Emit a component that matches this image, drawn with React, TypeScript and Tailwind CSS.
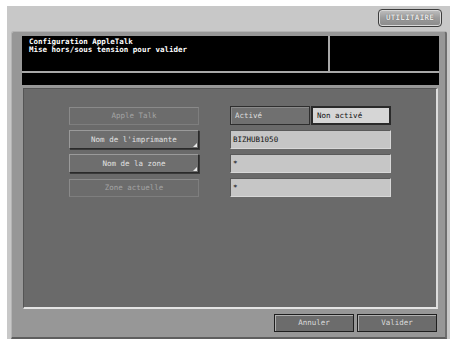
import React from "react";

const mono = { fontFamily: '"DejaVu Sans Mono", "Liberation Mono", monospace' };

function LeftBtn({ label, disabled, corner }: { label: string; disabled?: boolean; corner?: boolean }) {
  if (disabled) {
    return (
      <div className="relative h-[18px] w-[130px] flex items-center justify-center border border-t-[#8a8a8a] border-l-[#8a8a8a] border-b-[#7e7e7e] border-r-[#7e7e7e] bg-[#6c6c6c] text-[#a4a4a4] text-[7.5px]">
        {label}
      </div>
    );
  }
  return (
    <div className="relative h-[19px] w-[130px] flex items-center justify-center border border-t-[#9a9a9a] border-l-[#9a9a9a] border-b-[#2a2a2a] border-r-[#2a2a2a] bg-[#6e6e6e] text-[#e2e2e2] text-[7.5px] shadow-[1px_1px_0_#3a3a3a]">
      {label}
      {corner && (
        <div className="absolute right-[1px] bottom-[1px] w-0 h-0 border-l-[4px] border-l-transparent border-b-[4px] border-b-[#e8e8e8]" />
      )}
    </div>
  );
}

function Field({ value }: { value: string }) {
  return (
    <div className="h-[19px] w-[161px] flex items-center pl-[2px] bg-[#c6c6c6] border border-t-[#5a5a5a] border-l-[#5a5a5a] border-b-[#d8d8d8] border-r-[#d8d8d8] text-[#111] text-[7.5px]">
      {value}
    </div>
  );
}

export default function App() {
  return (
    <div className="w-[457px] h-[342px] bg-white overflow-hidden" style={mono}>
      <div className="ml-[7px] mt-[6px] w-[443px] h-[333px] bg-[#c8c8c8] flex flex-col">
        {/* top bar */}
        <div className="h-[25px] flex items-start justify-end pr-[8px] pt-[3px]">
          <div className="w-[64px] h-[18px] rounded-[4px] border border-[#3c3c3c] bg-gradient-to-b from-[#c0c0c0] via-[#9c9c9c] to-[#8a8a8a] flex items-center justify-center shadow-[inset_0_0_0_1px_#d8d8d8]">
            <span className="text-[7.5px] font-bold text-[#e8e8e8] tracking-[0.3px]" style={{ textShadow: "0 0 1px #555" }}>
              UTILITAIRE
            </span>
          </div>
        </div>
        {/* main panel */}
        <div className="ml-[4px] w-[436px] flex-1 bg-[#979797] rounded-tl-[3px] rounded-tr-[3px] border-t border-l border-t-[#b4b4b4] border-l-[#b4b4b4] border-r-2 border-r-[#6e6e6e] border-b-2 border-b-[#5e5e5e] flex flex-col pt-[4px] pl-[10px] pr-[7px]">
          {/* header */}
          <div className="flex flex-col w-[417px] bg-[#a8a8a8]">
            <div className="flex h-[35px] gap-[2px]">
              <div className="w-[306px] bg-black text-white text-[7.5px] font-bold leading-[8px] pl-[7px] pt-[2px]">
                <div>Configuration AppleTalk</div>
                <div>Mise hors/sous tension pour valider</div>
              </div>
              <div className="flex-1 bg-black" />
            </div>
            <div className="h-[1px]" />
            <div className="h-[12px] bg-black mt-[1px]" />
          </div>
          {/* content */}
          <div className="mt-[3px] ml-[1px] w-[415px] h-[221px] bg-[#6a6a6a] border-t border-l border-t-[#555] border-l-[#555] border-b-2 border-r-2 border-b-[#e4e4e4] border-r-[#dcdcdc] pt-[17px] pl-[45px]">
            <div className="flex flex-col gap-[5px]">
              <div className="flex items-center">
                <LeftBtn label="Apple Talk" disabled />
                <div className="ml-[31px] flex gap-[1px]">
                  <div className="w-[80px] h-[19px] flex items-center pl-[4px] bg-[#707070] border border-[#2e2e2e] text-[#dedede] text-[7.5px] shadow-[inset_1px_1px_0_#8a8a8a]">
                    Activé
                  </div>
                  <div className="w-[80px] h-[19px] flex items-center pl-[4px] bg-[#d6d6d6] border-2 border-[#2a2a2a] text-[#111] text-[7.5px]">
                    Non activé
                  </div>
                </div>
              </div>
              <div className="flex items-center">
                <LeftBtn label="Nom de l'imprimante" corner />
                <div className="ml-[31px]">
                  <Field value="BIZHUB1050" />
                </div>
              </div>
              <div className="flex items-center">
                <LeftBtn label="Nom de la zone" corner />
                <div className="ml-[31px]">
                  <Field value="*" />
                </div>
              </div>
              <div className="flex items-center">
                <LeftBtn label="Zone actuelle" disabled />
                <div className="ml-[31px]">
                  <Field value="*" />
                </div>
              </div>
            </div>
          </div>
          {/* bottom buttons */}
          <div className="flex justify-end gap-[3px] mt-[5px] pr-[1px]">
            <div className="w-[80px] h-[18px] flex items-center justify-center bg-[#6c6c6c] border border-[#1e1e1e] shadow-[inset_1px_1px_0_#b0b0b0] text-[#dcdcdc] text-[7.5px]">
              Annuler
            </div>
            <div className="w-[80px] h-[18px] flex items-center justify-center bg-[#6c6c6c] border border-[#1e1e1e] shadow-[inset_1px_1px_0_#b0b0b0] text-[#dcdcdc] text-[7.5px]">
              Valider
            </div>
          </div>
        </div>
      </div>
    </div>
  );
}
